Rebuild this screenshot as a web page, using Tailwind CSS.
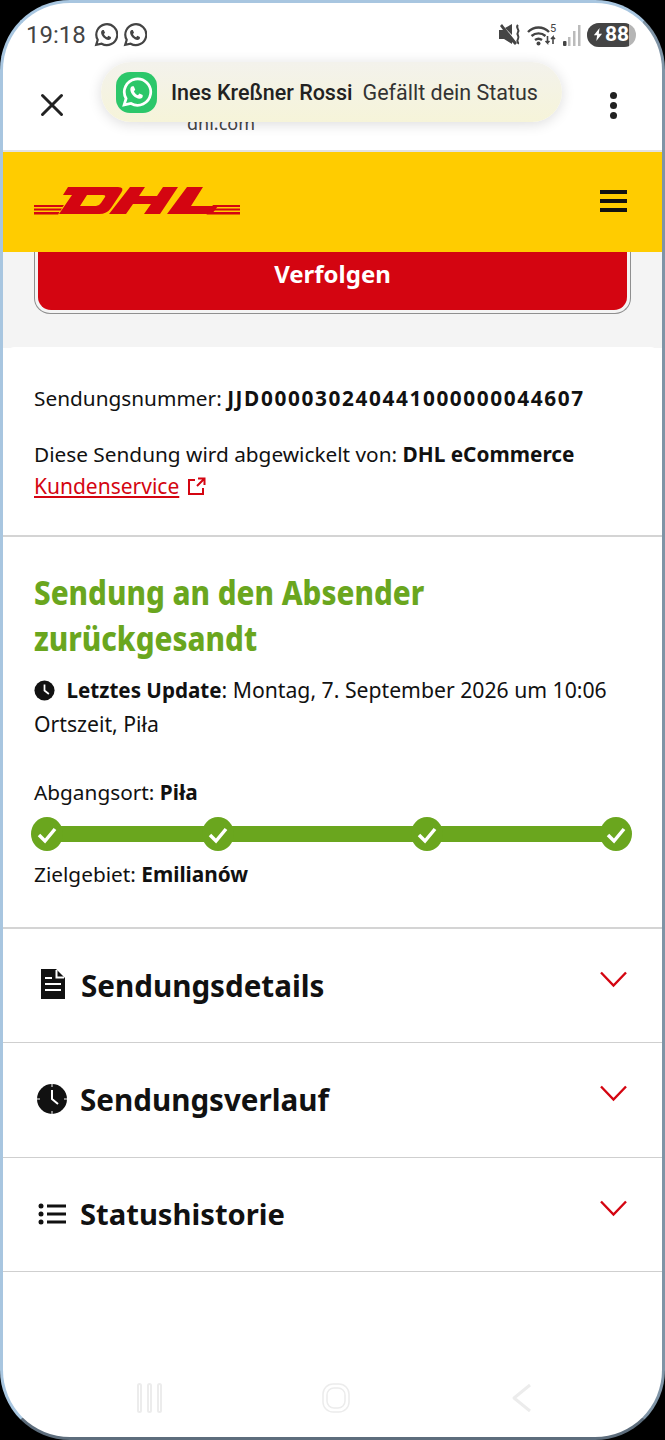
<!DOCTYPE html>
<html lang="en">
<head>
  <meta charset="UTF-8" />
  <meta name="viewport" content="width=device-width, initial-scale=1.0" />
  <title>DHL Sendungsverfolgung</title>
  <script src="https://cdn.jsdelivr.net/npm/@tailwindcss/browser@4"></script>
</head>
<body class="bg-black font-['Noto_Sans',sans-serif] text-[#111]">
  <div class="relative w-[665px] h-[1440px] overflow-hidden rounded-[70px] border-[3px] border-t-[#a8c6e0] border-l-[#a8c6e0] border-r-[#7f94a6] border-b-[#5d6d7c] bg-white">

    <!-- status bar -->
    <div class="h-[51px] flex items-center justify-between pl-[23px] pr-[26px] pt-[12px]">
      <div class="flex items-center gap-[5px] text-[#444]">
        <span class="text-[24px] font-['Roboto',sans-serif] mr-[3px]">19:18</span>
        <svg class="w-[24px] h-[24px]" viewBox="1 1 22 22" fill="none" stroke="currentColor" stroke-width="2"><path d="M3 21l1.400-4.600A9.600 9.600 0 1 1 8 20z"/><path fill="currentColor" stroke="none" d="M9 7.500c-.6 0-1.500.8-1.500 2.300 0 3 3.700 6.700 6.700 6.700 1.500 0 2.300-1 2.300-1.600v-1l-2.400-1.100-1 1.200c-1.300-.5-2.500-1.700-3-3l1-1L10 7.500z"/></svg>
        <svg class="w-[24px] h-[24px]" viewBox="1 1 22 22" fill="none" stroke="currentColor" stroke-width="2"><path d="M3 21l1.400-4.600A9.600 9.600 0 1 1 8 20z"/><path fill="currentColor" stroke="none" d="M9 7.500c-.6 0-1.500.8-1.500 2.300 0 3 3.700 6.700 6.700 6.700 1.500 0 2.300-1 2.300-1.600v-1l-2.400-1.100-1 1.200c-1.300-.5-2.500-1.700-3-3l1-1L10 7.500z"/></svg>
      </div>
      <div class="flex items-center gap-[5px] text-[#444]">
        <svg class="w-[23px] h-[24px]" viewBox="0 0 23 24" fill="currentColor"><path d="M0 7h4L1 3l2-2 15 19-2 2-3-3v2L5 16H0z"/><path d="M6 5l7-4v11z"/><path d="M19 2c-3 3 2 4 0 7s2 4 0 7 1 3 0 5" fill="none" stroke="currentColor" stroke-width="2"/></svg>
        <svg class="w-[30px] h-[24px]" viewBox="0 0 30 24" fill="none" stroke="currentColor" stroke-width="2.400"><path d="M1 9c6-6 15-6 21 0M4.500 13c4-3.500 10-3.500 14 0M8 17c2-1.500 5-1.500 7 0"/><circle cx="11.500" cy="20.500" r="2" fill="currentColor" stroke="none"/><path stroke-width="1.600" d="M20.500 13v7l-2-2M20.500 20l2-2M26 21v-7l-2 2M26 14l2 2"/><text x="23" y="9" font-size="11" fill="currentColor" stroke="none" font-family="Roboto">5</text></svg>
        <svg class="w-[20px] h-[24px]" viewBox="0 0 20 24"><rect x="1" y="18" width="3.500" height="5" rx="1" fill="#444"/><rect x="6" y="14" width="2.500" height="9" fill="#bbb"/><rect x="11" y="8" width="2.500" height="15" fill="#bbb"/><rect x="16" y="2" width="2.500" height="21" fill="#bbb"/></svg>
        <div class="relative w-[49px] h-[24px] rounded-full bg-[#b5b5b5] overflow-hidden">
          <div class="absolute inset-y-0 left-0 w-[42px] bg-[#444] flex items-center pl-[6px] gap-[2px] text-white">
            <svg class="w-[11px] h-[15px]" viewBox="0 0 12 16" fill="currentColor"><path d="M8 0L1 9h4l-1 7 7-9H7z"/></svg>
            <span class="text-[21px] leading-none font-bold font-['Roboto',sans-serif]">88</span>
          </div>
        </div>
      </div>
    </div>

    <!-- browser toolbar -->
    <div class="relative h-[98px] flex items-center justify-between pl-[37px] pr-[45px] pt-[6px] border-b-2 border-[#e2e2e2]">
      <svg class="w-[24px] h-[24px]" viewBox="0 0 24 24" stroke="#222" stroke-width="3" stroke-linecap="round"><path d="M2.500 2.500l19 19M21.500 2.500l-19 19"/></svg>
      <span class="absolute left-[184px] top-[60px] text-[18px] leading-none text-[#444]">dhl.com</span>
      <div class="flex flex-col gap-[3px]">
        <span class="block w-[7px] h-[7px] rounded-full bg-[#222]"></span>
        <span class="block w-[7px] h-[7px] rounded-full bg-[#222]"></span>
        <span class="block w-[7px] h-[7px] rounded-full bg-[#222]"></span>
      </div>
    </div>

    <!-- whatsapp heads-up notification -->
    <div class="absolute left-[98px] top-[59px] w-[461px] h-[60px] rounded-[30px] bg-gradient-to-b from-[#f3f2ec] to-[#f6f4d9] shadow-[0_2px_14px_rgba(0,0,0,0.14)] flex items-center pl-[15px]">
      <div class="w-[41px] h-[41px] rounded-[14px] bg-[#2cc76a] flex items-center justify-center">
        <svg class="w-[33px] h-[33px]" viewBox="0 0 24 24" fill="none" stroke="#fff" stroke-width="2"><path d="M3 21l1.400-4.600A9.600 9.600 0 1 1 8 20z"/><path fill="#fff" stroke="none" d="M9 7.500c-.6 0-1.500.8-1.500 2.300 0 3 3.700 6.700 6.700 6.700 1.500 0 2.300-1 2.300-1.600v-1l-2.400-1.100-1 1.200c-1.300-.5-2.500-1.700-3-3l1-1L10 7.500z"/></svg>
      </div>
      <span class="ml-[14px] mt-[2px] text-[21.500px] font-medium font-['Roboto',sans-serif] text-[#222]">Ines Kreßner Rossi</span>
      <span class="ml-[10px] mt-[2px] text-[21.500px] font-['Roboto',sans-serif] text-[#333]">Gefällt dein Status</span>
    </div>

    <!-- dhl header -->
    <div class="h-[100px] bg-[#ffcc00] flex items-center justify-between pl-[31px] pr-[35px]">
      <svg class="w-[206px] h-[29px] -mt-[3px]" viewBox="0 0 206 29" fill="#d40511">
        <path d="M0 19h30l-1.400 2H0zM0 22.500h28l-1.400 2H0zM0 26h25.400l-1.200 2.500H0z"/>
        <path fill-rule="evenodd" d="M34 1H84Q91 1 87 7L77 22Q73 28 65 28H25L38 9H29zM53 9L46 20H62Q65 20 67 17L71 11Q72 9 69 9z"/>
        <path d="M96 1h15l-6 9h18l6-9h15l-18 27h-16l7-10h-18l-7 10h-17z"/>
        <path d="M153 1h16l-12 19h27l-6 8h-45z"/>
        <path d="M179 19h27v2h-28.400zM176.600 22.500h29.400v2h-30.800zM174 26h32v2.500h-33.500z"/>
      </svg>
      <div class="flex flex-col gap-[5px] -mt-[2px]">
        <span class="block w-[27px] h-[4px] bg-[#111]"></span>
        <span class="block w-[27px] h-[4px] bg-[#111]"></span>
        <span class="block w-[27px] h-[4px] bg-[#111]"></span>
      </div>
    </div>

    <!-- track button -->
    <div class="h-[96px] bg-[#f4f4f4] px-[31px]">
      <div class="h-[62px] rounded-b-[16px] border border-t-0 border-[#8f8f8f] p-[3px] pt-0">
        <div class="h-[58px] rounded-b-[13px] bg-[#d40511] text-white text-[24px] font-bold flex items-center justify-center pb-[14px]">Verfolgen</div>
      </div>
    </div>

    <!-- shipment info -->
    <div class="bg-white rounded-t-[12px] -mt-[1px] px-[31px] pt-[35px] pb-[33px] text-[20.800px] leading-[32px] border-b-2 border-[#d4d4d4]">
      <p>Sendungsnummer: <b class="tracking-[1.600px]">JJD000030240441000000044607</b></p>
      <p class="mt-[24px]">Diese Sendung wird abgewickelt von: <b>DHL eCommerce</b></p>
      <p class="flex items-center gap-[8px]">
        <a class="underline text-[#d40511] text-[21px]">Kundenservice</a>
        <svg class="w-[19px] h-[19px]" viewBox="0 0 19 19" fill="none" stroke="#d40511" stroke-width="2"><path d="M8 3H2v14h14v-6M10 9l7-7M11 1.500h6.500V8"/></svg>
      </p>
    </div>

    <!-- status -->
    <div class="px-[31px] pt-[32px] pb-[37px] border-b-2 border-[#d4d4d4]">
      <h1 class="text-[34px] leading-[46px] font-extrabold text-[#6aa61e] scale-x-[0.87] origin-left whitespace-nowrap">Sendung an den Absender<br />zurückgesandt</h1>
      <p class="mt-[12px] text-[21.200px] leading-[34px]">
        <svg class="inline-block w-[21px] h-[21px] mr-[6px] -mt-[4px]" viewBox="0 0 24 24"><circle cx="12" cy="12" r="11.500" fill="#111"/><path d="M12 5v7l5 4" fill="none" stroke="#fff" stroke-width="2"/></svg>
        <b class="text-[20.600px]">Letztes Update</b>: Montag, 7. September 2026 um 10:06 Ortszeit, Piła
      </p>
      <p class="mt-[35px] text-[20.800px] leading-[32px]">Abgangsort: <b>Piła</b></p>
      <div class="relative h-[36px] mt-[9px] -mx-[3px]">
        <div class="absolute left-[14px] right-[14px] top-[9px] h-[16px] bg-[#6aa61e]"></div>
        <div class="absolute inset-0 flex">
          <svg class="w-[32px] h-[34px]" viewBox="0 0 32 34"><ellipse cx="16" cy="17" rx="16" ry="17" fill="#6aa61e"/><path d="M8 18l6 6 10-12" fill="none" stroke="#fff" stroke-width="3.500"/></svg>
          <svg class="w-[32px] h-[34px] ml-[139px]" viewBox="0 0 32 34"><ellipse cx="16" cy="17" rx="16" ry="17" fill="#6aa61e"/><path d="M8 18l6 6 10-12" fill="none" stroke="#fff" stroke-width="3.500"/></svg>
          <svg class="w-[32px] h-[34px] ml-[177px]" viewBox="0 0 32 34"><ellipse cx="16" cy="17" rx="16" ry="17" fill="#6aa61e"/><path d="M8 18l6 6 10-12" fill="none" stroke="#fff" stroke-width="3.500"/></svg>
          <svg class="w-[32px] h-[34px] ml-[157px]" viewBox="0 0 32 34"><ellipse cx="16" cy="17" rx="16" ry="17" fill="#6aa61e"/><path d="M8 18l6 6 10-12" fill="none" stroke="#fff" stroke-width="3.500"/></svg>
        </div>
      </div>
      <p class="mt-[5px] text-[20.800px] leading-[32px]">Zielgebiet: <b>Emilianów</b></p>
    </div>

    <!-- accordion -->
    <div class="h-[114px] flex items-center pl-[38px] pr-[35px] border-b border-[#cfcfcf]">
      <svg class="w-[24px] h-[30px] mr-[16px] -mt-[3px]" viewBox="0 0 24 30"><path d="M0 0h15l9 9v21H0z" fill="#111"/><path d="M15.500 1v7.500H23M4 9h7M4 15h16M4 21h16" fill="none" stroke="#fff" stroke-width="2"/></svg>
      <span class="flex-1 mt-[1px] text-[29.600px] font-bold">Sendungsdetails</span>
      <svg class="w-[27px] h-[17px] -mt-[13px]" viewBox="0 0 27 17" fill="none" stroke="#d40511" stroke-width="2.400"><path d="M1 1.500l12.500 13 12.500-13"/></svg>
    </div>
    <div class="h-[115px] flex items-center pl-[34px] pr-[35px] border-b border-[#cfcfcf]">
      <svg class="w-[30px] h-[30px] mr-[13px] -mt-[2px]" viewBox="0 0 30 30"><circle cx="15" cy="15" r="15" fill="#111"/><path d="M15 6v9l6 5" fill="none" stroke="#fff" stroke-width="2"/><path d="M15 0v3M15 27v3M0 15h3M27 15h3" stroke="#fff" stroke-width="1"/></svg>
      <span class="flex-1 text-[29.600px] font-bold">Sendungsverlauf</span>
      <svg class="w-[27px] h-[17px] -mt-[13px]" viewBox="0 0 27 17" fill="none" stroke="#d40511" stroke-width="2.400"><path d="M1 1.500l12.500 13 12.500-13"/></svg>
    </div>
    <div class="h-[114px] flex items-center pl-[35px] pr-[35px] border-b border-[#cfcfcf]">
      <svg class="w-[28px] h-[22px] mr-[14px] -mt-[2px]" viewBox="0 0 28 22" fill="#111"><circle cx="3" cy="3" r="2.500"/><circle cx="3" cy="11" r="2.500"/><circle cx="3" cy="19" r="2.500"/><rect x="9" y="1.500" width="19" height="3"/><rect x="9" y="9.500" width="19" height="3"/><rect x="9" y="17.500" width="19" height="3"/></svg>
      <span class="flex-1 text-[29.200px] font-bold">Statushistorie</span>
      <svg class="w-[27px] h-[17px] -mt-[13px]" viewBox="0 0 27 17" fill="none" stroke="#d40511" stroke-width="2.400"><path d="M1 1.500l12.500 13 12.500-13"/></svg>
    </div>

    <!-- android nav bar -->
    <div class="absolute inset-x-0 bottom-[24px] flex justify-between pl-[133px] pr-[129px]">
      <svg class="w-[28px] h-[30px]" viewBox="0 0 28 30" fill="none" stroke="#ececec" stroke-width="2"><rect x="2" y="1" width="3" height="28" rx="1.500"/><rect x="12" y="1" width="3" height="28" rx="1.500"/><rect x="22" y="1" width="3" height="28" rx="1.500"/></svg>
      <svg class="w-[28px] h-[30px] -ml-[3px]" viewBox="0 0 28 30" fill="none" stroke="#ececec" stroke-width="1.500"><rect x="1" y="1" width="26" height="28" rx="10"/><rect x="5" y="5" width="18" height="20" rx="7"/></svg>
      <svg class="w-[22px] h-[30px]" viewBox="0 0 22 30" fill="none" stroke="#ececec" stroke-width="3" stroke-linejoin="round"><path d="M19 2L3 15l16 13"/></svg>
    </div>
  </div>
</body>
</html>
